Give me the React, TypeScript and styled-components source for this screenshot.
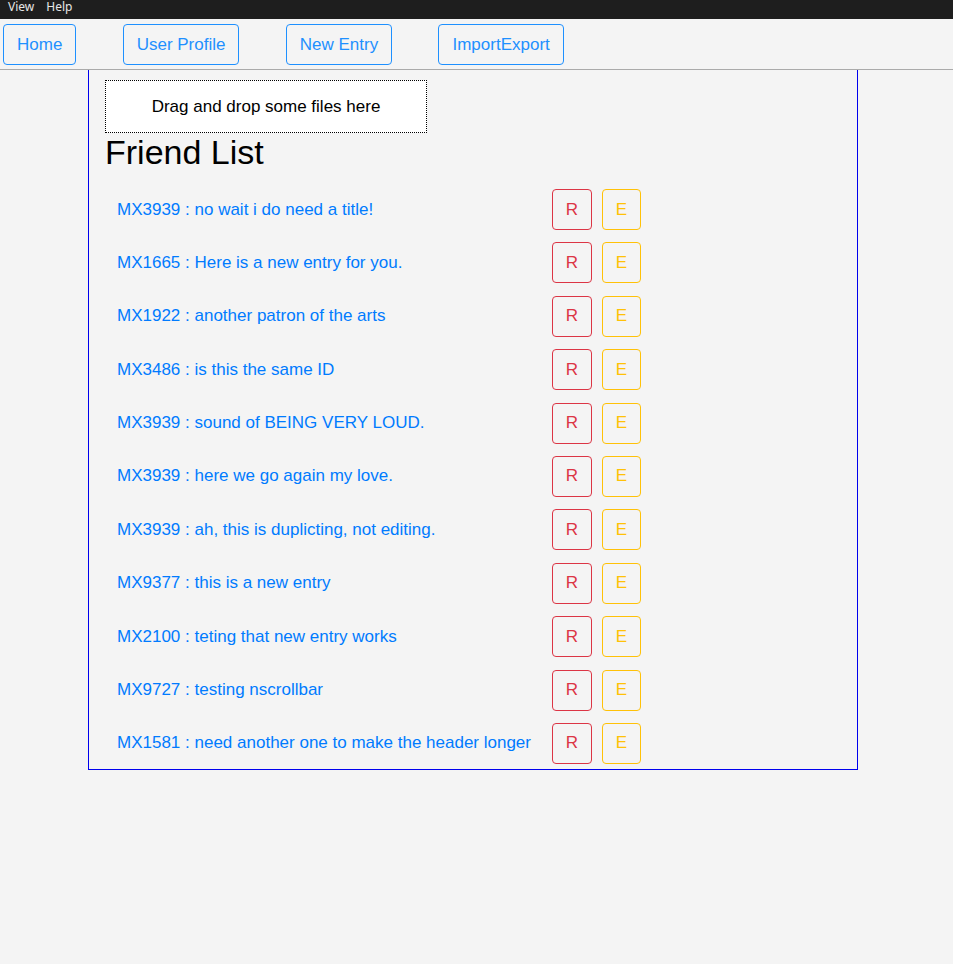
import { Fragment } from "react";
import styled, { createGlobalStyle } from "styled-components";

const GlobalStyle = createGlobalStyle`
  html, body {
    margin: 0;
    padding: 0;
    background: #f4f4f4;
    font-family: "Liberation Sans", Arial, sans-serif;
    font-size: 17px;
  }
`;

interface Friend {
  id: string;
  title: string;
}

const friends: Friend[] = [
  { id: "MX3939", title: "no wait i do need a title!" },
  { id: "MX1665", title: "Here is a new entry for you." },
  { id: "MX1922", title: "another patron of the arts" },
  { id: "MX3486", title: "is this the same ID" },
  { id: "MX3939", title: "sound of BEING VERY LOUD." },
  { id: "MX3939", title: "here we go again my love." },
  { id: "MX3939", title: "ah, this is duplicting, not editing." },
  { id: "MX9377", title: "this is a new entry" },
  { id: "MX2100", title: "teting that new entry works" },
  { id: "MX9727", title: "testing nscrollbar" },
  { id: "MX1581", title: "need another one to make the header longer" },
];

const MenuBar = styled.div`
  height: 19px;
  box-sizing: border-box;
  background: #1e1e1e;
  display: flex;
  align-items: flex-start;
  gap: 12px;
  padding-left: 8px;
`;
const MenuItem = styled.span`
  color: #e6e6e6;
  font-family: "Noto Sans", "Open Sans", sans-serif;
  font-size: 12px;
  line-height: 14px;
`;
const Nav = styled.nav`
  height: 51px;
  box-sizing: border-box;
  border-bottom: 1px solid #aaaaaa;
  display: flex;
  align-items: flex-start;
  gap: 46.3px;
  padding: 5px 0 0 3px;
`;
const NavButton = styled.button`
  font-family: "Liberation Sans", Arial, sans-serif;
  font-size: 17px;
  line-height: 21px;
  color: #1e90ff;
  background: transparent;
  border: 1px solid #1e90ff;
  border-radius: 4px;
  padding: 9px 13px;
`;
const Panel = styled.main`
  margin-left: 88px;
  width: 770px;
  box-sizing: border-box;
  border: 1px solid #0000ee;
  border-top: none;
  padding: 10px 0 5px 16px;
`;
const DropZone = styled.div`
  width: 322px;
  height: 53px;
  box-sizing: border-box;
  background: #ffffff;
  border: 1px dotted #000000;
  display: flex;
  align-items: center;
  justify-content: center;
  color: #000;
`;
const Heading = styled.h1`
  margin: 1px 0 0;
  font-size: 34px;
  line-height: 36px;
  font-weight: 400;
  color: #000;
`;
const List = styled.div`
  display: grid;
  grid-template-columns: 425px 40px 39px;
  grid-auto-rows: 41px;
  column-gap: 10px;
  row-gap: 12.4px;
  padding: 19px 0 0 12px;
  align-items: center;
`;
const EntryText = styled.span`
  color: #007bff;
  white-space: nowrap;
`;
const ActionButton = styled.button<{ $tone: string }>`
  width: 100%;
  height: 41px;
  padding: 0;
  font-family: "Liberation Sans", Arial, sans-serif;
  font-size: 17px;
  color: ${(p) => p.$tone};
  background: transparent;
  border: 1px solid ${(p) => p.$tone};
  border-radius: 4px;
`;

export default function App() {
  return (
    <>
      <GlobalStyle />
      <MenuBar>
        <MenuItem>View</MenuItem>
        <MenuItem>Help</MenuItem>
      </MenuBar>
      <Nav>
        <NavButton>Home</NavButton>
        <NavButton>User Profile</NavButton>
        <NavButton>New Entry</NavButton>
        <NavButton>ImportExport</NavButton>
      </Nav>
      <Panel>
        <DropZone>Drag and drop some files here</DropZone>
        <Heading>Friend List</Heading>
        <List>
          {friends.map((f, i) => (
            <Fragment key={i}>
              <EntryText>
                {f.id} : {f.title}
              </EntryText>
              <ActionButton $tone="#dc3545">R</ActionButton>
              <ActionButton $tone="#ffc107">E</ActionButton>
            </Fragment>
          ))}
        </List>
      </Panel>
    </>
  );
}
